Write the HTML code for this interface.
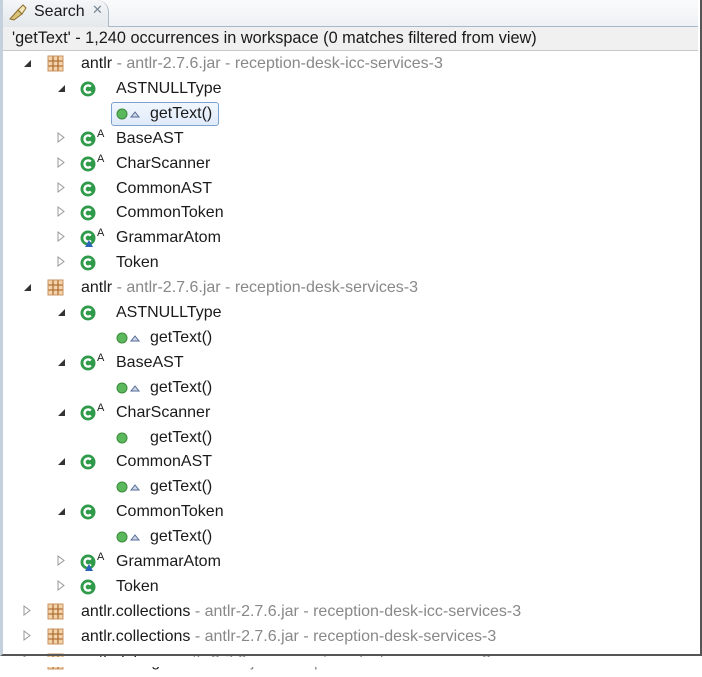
<!DOCTYPE html>
<html><head><meta charset="utf-8"><style>
body{margin:0;width:702px;height:659px;background:#fff;overflow:hidden;position:relative;font-family:"Liberation Sans",sans-serif;font-size:16px;color:#1a1a1a}
.top{position:absolute;left:0;top:0;width:698px;height:26px;background:linear-gradient(#fafbfc,#eef1f4);border-bottom:1px solid #a9b8c8}
.tab{position:absolute;left:0;top:0;width:108px;height:27px;background:linear-gradient(#f4f6f8,#e4e8ec);border-right:1px solid #b0bac6;border-top-right-radius:12px}
.hdr{position:absolute;left:3px;top:27px;width:695px;height:23px;background:#f0f0f0;border-bottom:1px solid #c8c8c8;line-height:23px;font-size:16.3px}
.frame{position:absolute;left:0;top:0;width:697px;height:654px;border-right:2px solid #555;border-bottom:2px solid #555;border-left:3px solid #c4d0dc;box-sizing:content-box}
.below{position:absolute;left:0;top:657px;width:702px;height:10px;background:#fff}
.r{position:absolute;height:24px;line-height:24px;white-space:nowrap}
.g{color:#888}
.sel{position:absolute;left:111px;top:102px;width:106px;height:22px;border:1px solid #7da2ce;border-radius:3px;background:linear-gradient(#f2f7fd,#dfeafa)}
</style></head><body>
<div class="top"></div>
<div class="tab"></div>
<svg style="position:absolute;left:8px;top:3px" width="20" height="18" viewBox="0 0 20 18"><path d="M2 16 L10 7 L14 11 L6 17Z" fill="#d9c27a" stroke="#8a6b2a"/><path d="M10 7 L15 2 L18 5 L14 11Z" fill="#f3e7b8" stroke="#8a6b2a"/></svg>
<div style="position:absolute;left:34px;top:2px;font-size:16px;line-height:20px">Search</div>
<div style="position:absolute;left:92px;top:2px;font-size:13px;color:#7a8796">✕</div>
<div class="hdr"><span style="margin-left:9px">'getText' - 1,240 occurrences in workspace (0 matches filtered from view)</span></div>
<div class="sel"></div>
<div id="t"></div>
<div class="frame"></div>
<div class="below"></div>
<script>
const P='<svg width="17" height="17" viewBox="0 0 17 17"><rect x="1" y="1" width="15" height="15" fill="#f3d3a8"/><path d="M1 6H16M1 11H16M6 1V16M11 1V16" stroke="#b0703a" stroke-width="1.3"/><rect x="1" y="1" width="15" height="15" fill="none" stroke="#c89060"/></svg>';
function C(a,t){return '<svg width="30" height="20" viewBox="0 0 30 20" style="overflow:visible"><circle cx="8" cy="9" r="7.5" fill="#2e9a4a"/><path d="M10.8 6.6A3.6 3.6 0 1 0 10.8 11.4" fill="none" stroke="#fff" stroke-width="2.4"/>'+(a?'<text x="17" y="7" font-size="11" font-family="Liberation Sans" fill="#222">A</text>':'')+(t?'<path d="M5 18L9 11L13 18Z" fill="#2a64b8"/>':'')+'</svg>'}
const M=(t)=>'<svg width="30" height="12" viewBox="0 0 30 12"><circle cx="6" cy="6" r="5" fill="#5cb85c" stroke="#3a8a3a"/>'+(t?'<path d="M15 9L19 4L23 9Z" fill="#cfd6e6" stroke="#556a99"/>':'')+'</svg>';
const OPEN='<svg width="9" height="9"><path d="M1 8H8V1Z" fill="#333"/></svg>';
const CL='<svg width="9" height="11"><path d="M1 1L7 5.5L1 10Z" fill="none" stroke="#999"/></svg>';
const rows=[
[0,1,'p','antlr<span class="g"> - antlr-2.7.6.jar - reception-desk-icc-services-3</span>'],
[1,1,'c','ASTNULLType'],[2,0,'m','getText()'],
[1,0,'ca','BaseAST'],[1,0,'ca','CharScanner'],[1,0,'c','CommonAST'],[1,0,'c','CommonToken'],[1,0,'cat','GrammarAtom'],[1,0,'c','Token'],
[0,1,'p','antlr<span class="g"> - antlr-2.7.6.jar - reception-desk-services-3</span>'],
[1,1,'c','ASTNULLType'],[2,0,'m','getText()'],[1,1,'ca','BaseAST'],[2,0,'m','getText()'],[1,1,'ca','CharScanner'],[2,0,'mn','getText()'],
[1,1,'c','CommonAST'],[2,0,'m','getText()'],[1,1,'c','CommonToken'],[2,0,'m','getText()'],
[1,0,'cat','GrammarAtom'],[1,0,'c','Token'],
[0,0,'p','antlr.collections<span class="g"> - antlr-2.7.6.jar - reception-desk-icc-services-3</span>'],
[0,0,'p','antlr.collections<span class="g"> - antlr-2.7.6.jar - reception-desk-services-3</span>'],
[0,0,'p','antlr.debug<span class="g"> - antlr-2.7.6.jar - reception-desk-icc-services-3</span>']];
let h='';
rows.forEach((r,i)=>{const cy=64+24.9*i,top=cy-12;const [lv,op,k,txt]=r;
 if(lv==0){h+=`<div class="r" style="left:23px;top:${top}px">${op?OPEN:CL}</div><div class="r" style="left:47px;top:${top+3}px;line-height:0">${P}</div><div class="r" style="left:81px;top:${top}px">${txt}</div>`}
 else if(lv==1){h+=`<div class="r" style="left:57px;top:${top}px">${op?OPEN:CL}</div><div class="r" style="left:80px;top:${top+3}px;line-height:0">${C(k.includes('a'),k.includes('t'))}</div><div class="r" style="left:116px;top:${top}px">${txt}</div>`}
 else{h+=`<div class="r" style="left:116px;top:${top+6}px;line-height:0">${M(k!='mn')}</div><div class="r" style="left:150px;top:${top}px">${txt}</div>`}
});
document.getElementById('t').innerHTML=h;
</script>
</body></html>
